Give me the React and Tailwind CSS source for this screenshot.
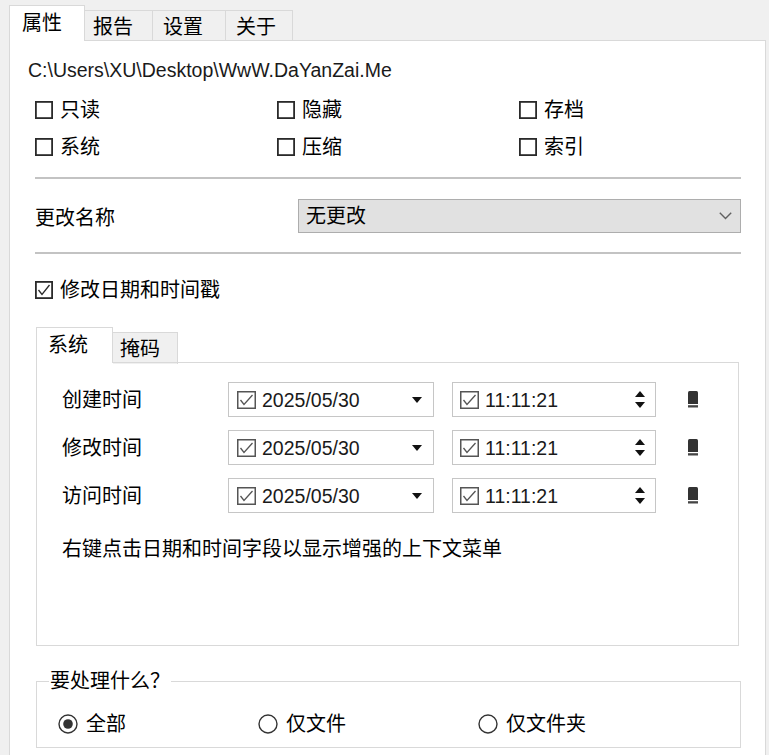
import React from "react";

const Box = ({ checked = false, dark = "#2a2a2a", w = 18, h = 18, sw = 1.8 }) => (
  <svg width={w} height={h} viewBox={`0 0 ${w} ${h}`} className="shrink-0">
    <rect x={sw / 2} y={sw / 2} width={w - sw} height={h - sw} fill="white" stroke={dark} strokeWidth={sw} />
    {checked && (
      <path d={`M3.5 ${h / 2} L7 ${h - 4.5} L${w - 3.5} 4`} stroke={dark} strokeWidth="1.3" fill="none" />
    )}
  </svg>
);

const CheckItem = ({ label, checked }) => (
  <div className="flex items-center gap-[7px] h-[37px]">
    <Box checked={checked} />
    <span>{label}</span>
  </div>
);

const Radio = ({ label, checked }) => (
  <div className="flex items-center gap-[8px]">
    <svg width="20" height="20" viewBox="0 0 20 20" className="shrink-0">
      <circle cx="10" cy="10" r="9" fill="white" stroke="#333" strokeWidth="1.4" />
      {checked && <circle cx="10" cy="10" r="4.8" fill="#333" />}
    </svg>
    <span>{label}</span>
  </div>
);

const Triangle = ({ up = false }) => (
  <svg width="10" height="6" viewBox="0 0 10 6">
    <path d={up ? "M0 6 H10 L5 0 Z" : "M0 0 H10 L5 6 Z"} fill="#111" />
  </svg>
);

const Pin = () => (
  <svg width="10" height="17" viewBox="0 0 10 17">
    <path d="M1.5 0 H8.5 Q10 0 10 1.5 V13 H0 V1.5 Q0 0 1.5 0 Z" fill="#333" />
    <rect x="0" y="14.2" width="10" height="2.3" fill="#444" />
  </svg>
);

const DateRow = ({ label }) => (
  <div className="flex items-center h-[35px]">
    <span className="w-[166px]">{label}</span>
    <div className="w-[206px] h-[35px] border border-[#c6c6c6] flex items-center pl-[8px] pr-[11px]">
      <Box checked w={19} dark="#555" sw={1.5} />
      <span className="ml-[6px] text-[19.5px] text-[#1a1a1a]">2025/05/30</span>
      <span className="ml-auto flex"><Triangle /></span>
    </div>
    <div className="ml-[18px] w-[204px] h-[35px] border border-[#c6c6c6] flex items-center pl-[7px] pr-[10px]">
      <Box checked w={19} dark="#555" sw={1.5} />
      <span className="ml-[6px] text-[19.5px] text-[#1a1a1a]">11:11:21</span>
      <span className="ml-auto flex flex-col gap-[5px]">
        <Triangle up />
        <Triangle />
      </span>
    </div>
    <span className="ml-[32px] flex"><Pin /></span>
  </div>
);

export default function App() {
  return (
    <div className="w-[769px] h-[755px] bg-[#f0f0f0] flex flex-col pl-[9px] pr-[3px] text-[20px] leading-[28px] text-black font-['Liberation_Sans','Noto_Sans_CJK_SC',sans-serif] overflow-hidden">
      {/* top tabs */}
      <div className="h-[41px] flex items-end shrink-0">
        <div className="relative z-10 w-[76px] h-[36px] bg-white border border-[#d9d9d9] border-b-0 pl-[12px] pt-[3px]">属性</div>
        <div className="w-[68px] h-[32px] border border-[#d9d9d9] border-l-0 border-b-0 pl-[8px] pt-[2px] -mb-px">报告</div>
        <div className="w-[73px] h-[32px] border border-[#d9d9d9] border-l-0 border-b-0 pl-[10px] pt-[2px] -mb-px">设置</div>
        <div className="w-[67px] h-[32px] border border-[#d9d9d9] border-l-0 border-b-0 pl-[10px] pt-[2px] -mb-px">关于</div>
      </div>

      {/* main panel */}
      <div className="flex-1 -mt-px bg-white border border-[#d9d9d9] border-b-0 flex flex-col pl-[25px] pr-[24px]">
        <div className="mt-[15px] -ml-[7px] text-[19.5px] text-[#1a1a1a]">C:\Users\XU\Desktop\WwW.DaYanZai.Me</div>

        <div className="mt-[7px] grid grid-cols-[242px_242px_1fr]">
          <CheckItem label="只读" />
          <CheckItem label="隐藏" />
          <CheckItem label="存档" />
          <CheckItem label="系统" />
          <CheckItem label="压缩" />
          <CheckItem label="索引" />
        </div>

        <div className="mt-[12px] h-[2px] bg-[#c3c3c3]" />

        <div className="mt-[20px] flex items-center h-[34px]">
          <span className="w-[263px] pt-[3px]">更改名称</span>
          <div className="flex-1 h-[34px] bg-[#e1e1e1] border border-[#adadad] flex items-center pl-[7px] pr-[8px]">
            <span>无更改</span>
            <svg width="13" height="8" viewBox="0 0 13 8" className="ml-auto">
              <path d="M0.8 0.8 L6.5 6.5 L12.2 0.8" stroke="#606060" strokeWidth="1.4" fill="none" />
            </svg>
          </div>
        </div>

        <div className="mt-[19px] h-[2px] bg-[#c3c3c3]" />

        <div className="mt-[22px] flex items-center gap-[7px] h-[28px]">
          <Box checked />
          <span>修改日期和时间戳</span>
        </div>

        {/* inner tabs */}
        <div className="mt-[23px] ml-px flex items-end h-[36px]">
          <div className="relative z-10 w-[77px] h-[36px] bg-white border border-[#d9d9d9] border-b-0 pl-[11px] pt-[3px]">系统</div>
          <div className="w-[65px] h-[32px] bg-[#f0f0f0] border border-[#d9d9d9] border-l-0 border-b-0 pl-[7px] pt-[2px] -mb-px">掩码</div>
        </div>
        <div className="-mt-px ml-px mr-[2px] h-[284px] border border-[#d9d9d9] pl-[25px] pt-[19px] flex flex-col">
          <div className="flex flex-col gap-[13px]">
            <DateRow label="创建时间" />
            <DateRow label="修改时间" />
            <DateRow label="访问时间" />
          </div>
          <div className="mt-[22px]">右键点击日期和时间字段以显示增强的上下文菜单</div>
        </div>

        {/* group box */}
        <fieldset className="mt-[21px] ml-px border border-[#d9d9d9] pl-[12px] h-[81px]">
          <legend className="px-[1px]">要处理什么？</legend>
          <div className="mt-[15px] pl-[9px] grid grid-cols-[200px_220px_1fr]">
            <Radio label="全部" checked />
            <Radio label="仅文件" />
            <Radio label="仅文件夹" />
          </div>
        </fieldset>
      </div>
    </div>
  );
}
